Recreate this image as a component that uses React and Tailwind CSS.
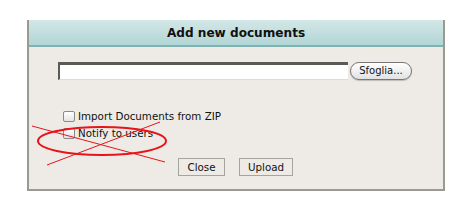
import React from "react";

const font = { fontFamily: '"DejaVu Sans", Verdana, sans-serif' };

function Check({ label }) {
  return (
    <label className="flex items-center gap-[3px] text-[10.3px] leading-[17px] text-[#111]">
      <span className="w-[12px] h-[11px] rounded-[2px] border border-[#8a8a8a] bg-gradient-to-b from-white to-[#e4e4e4]" />
      <span>{label}</span>
    </label>
  );
}

export default function App() {
  return (
    <div className="relative w-[462px] h-[211px] bg-white pt-[20px] pl-[27px]" style={font}>
      <div className="w-[418px] h-[171px] border-2 border-[#9a9b90] border-t-0 bg-[#eeebe6] flex flex-col">
        <div className="h-[27px] bg-gradient-to-b from-[#d3e7e7] to-[#b2d5d5] border-b-2 border-[#7db3b3] flex items-center justify-center">
          <span className="text-[12.1px] font-bold text-[#111] pt-[1px]">Add new documents</span>
        </div>
        <div className="flex items-center pl-[29px] pt-[15px]">
          <div className="w-[290px] h-[18px] bg-white border-t-[3px] border-l-[2px] border-[#5b5b55] border-b border-b-[#dcdcd6]" />
          <button className="ml-[2px] h-[18px] w-[62px] rounded-full border border-[#777] bg-gradient-to-b from-white to-[#e2e2e2] text-[10px] text-[#111] leading-none shadow-[0_1px_1px_rgba(0,0,0,0.2)]">
            Sfoglia...
          </button>
        </div>
        <div className="flex flex-col pl-[34px] pt-[28px]">
          <Check label="Import Documents from ZIP" />
          <Check label="Notify to users" />
        </div>
        <div className="flex gap-[14px] pl-[149px] pt-[16px]">
          <button className="w-[47px] h-[18px] bg-[#eeebe6] border border-[#a5a59c] text-[10.3px] text-[#111] leading-none">
            Close
          </button>
          <button className="w-[54px] h-[18px] bg-[#eeebe6] border border-[#a5a59c] text-[10.3px] text-[#111] leading-none">
            Upload
          </button>
        </div>
      </div>
      <svg className="absolute left-0 top-0 pointer-events-none" width="462" height="211">
        <ellipse cx="102" cy="141" rx="64" ry="14" fill="none" stroke="#e8141b" strokeWidth="2" />
        <line x1="32" y1="126" x2="165" y2="162" stroke="#e8141b" strokeWidth="1" />
        <line x1="47" y1="165" x2="160" y2="122" stroke="#e8141b" strokeWidth="1" />
      </svg>
    </div>
  );
}
